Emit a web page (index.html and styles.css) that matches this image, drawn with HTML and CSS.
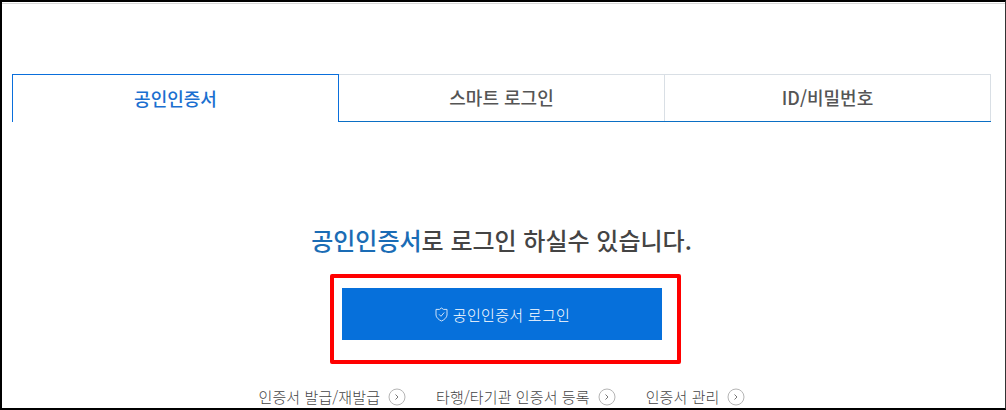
FILE: index.html
```html
<!DOCTYPE html>
<html lang="ko">
<head>
<meta charset="utf-8">
<title>공인인증서 로그인</title>
<link rel="stylesheet" href="styles.css">
</head>
<body>
<div class="frame">
  <div class="inner">
    <div class="tabs">
      <div class="tab active">공인인증서</div>
      <div class="tab">스마트 로그인</div>
      <div class="tab">ID/비밀번호</div>
    </div>
    <h2 class="headline"><span class="accent">공인인증서</span>로 로그인 하실수 있습니다.</h2>
    <div class="btn-wrap">
      <a class="login-btn">
        <svg class="shield" width="13" height="15" viewBox="0 0 13 15" fill="none" stroke="#cfe2f8" stroke-width="1"><path d="M6.5 1 L8.5 2.4 L12 2.4 L12 8 C12 10.500 9 13 6.5 14 C4 13 1 10.500 1 8 L1 2.4 L4.500 2.4 Z"/><path d="M4 7.300 L6 9.300 L9.200 5.500"/></svg>
        <span>공인인증서 로그인</span>
      </a>
      <div class="annotation"></div>
    </div>
    <div class="links">
      <a class="link">인증서 발급/재발급<svg class="chev" width="18" height="18" viewBox="0 0 18 18" fill="none"><circle cx="9" cy="9" r="8" stroke="#b5b5b5"/><path d="M7.500 6.500 L10 9 L7.500 11.500" stroke="#777"/></svg></a>
      <a class="link">타행/타기관 인증서 등록<svg class="chev" width="18" height="18" viewBox="0 0 18 18" fill="none"><circle cx="9" cy="9" r="8" stroke="#b5b5b5"/><path d="M7.500 6.500 L10 9 L7.500 11.500" stroke="#777"/></svg></a>
      <a class="link">인증서 관리<svg class="chev" width="18" height="18" viewBox="0 0 18 18" fill="none"><circle cx="9" cy="9" r="8" stroke="#b5b5b5"/><path d="M7.500 6.500 L10 9 L7.500 11.500" stroke="#777"/></svg></a>
    </div>
  </div>
</div>
</body>
</html>
```

FILE: styles.css
```css
* { box-sizing: border-box; }
html, body { margin: 0; padding: 0; background: #fff; }
body { font-family: "Noto Sans CJK KR", "Noto Sans", sans-serif; width: 1006px; height: 410px; overflow: hidden; }
.frame { width: 1006px; height: 410px; border-top: 2px solid #000; border-left: 2px solid #000; border-bottom: 2px solid #000; border-right: 1px solid #333; overflow: hidden; }
.inner { height: 100%; border-top: 1px solid #d8d8d8; padding: 70px 14px 0 10px; margin-top: 1px; }
.tabs { display: flex; height: 48px; border-bottom: 1px solid #0b6fc4; }
.tab { flex: 1; display: flex; align-items: center; justify-content: center; padding-bottom: 2px; font-size: 18px; font-weight: 500; color: #555; border-top: 1px solid #d9dfe5; border-right: 1px solid #d9dfe5; height: 47px; }
.tab.active { color: #1b6fd0; border: 1px solid #0a6fdc; border-bottom: 0; background: #fff; height: 48px; }
.headline { margin: 102px 0 0; text-align: center; font-size: 24px; line-height: 32px; font-weight: 500; color: #444; }
.accent { color: #1a6cb5; }
.btn-wrap { position: relative; width: 320px; height: 52px; margin: 32px auto 0; }
.login-btn { display: flex; align-items: center; justify-content: center; gap: 5px; width: 320px; height: 52px; padding-left: 2px; background: #0670db; color: #fff; font-size: 15px; font-weight: 300; letter-spacing: 0.3px; }
.annotation { position: absolute; left: -12px; top: -14px; width: 351px; height: 90px; border: 4px solid #f00; border-radius: 2px; }
.links { display: flex; justify-content: center; gap: 30px; margin-top: 47px; padding-left: 1px; font-size: 15px; font-weight: 300; color: #444; letter-spacing: 0.1px; }
.link { display: flex; align-items: center; gap: 8px; line-height: 20px; }
```
